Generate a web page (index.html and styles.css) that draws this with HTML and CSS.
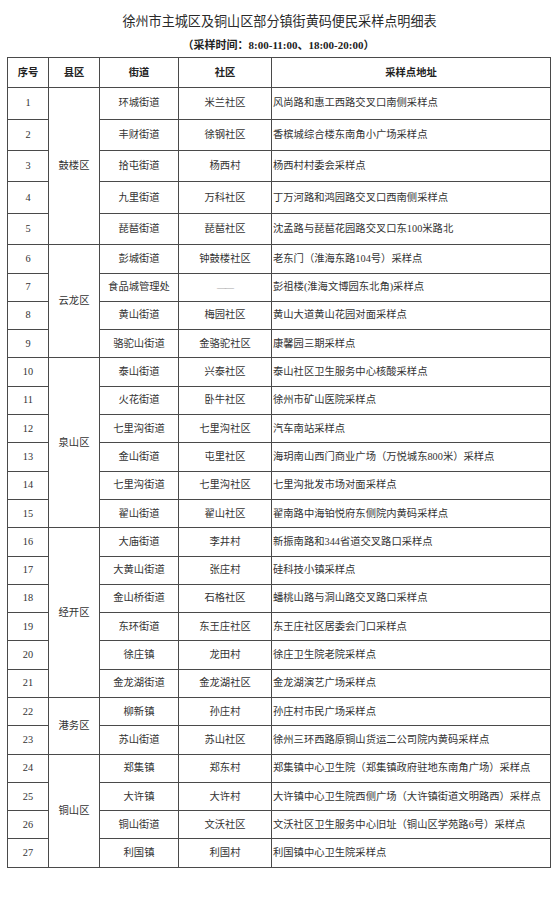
FILE: index.html
```html
<!DOCTYPE html>
<html lang="zh-CN">
<head>
<meta charset="utf-8">
<title>徐州市主城区及铜山区部分镇街黄码便民采样点明细表</title>
<link rel="stylesheet" href="styles.css">
</head>
<body>
<div class="page">
  <h1 class="title">徐州市主城区及铜山区部分镇街黄码便民采样点明细表</h1>
  <p class="subtitle">（采样时间：8:00-11:00、18:00-20:00）</p>
  <table class="sheet">
    <colgroup>
      <col class="c-no"><col class="c-dist"><col class="c-street"><col class="c-comm"><col class="c-addr">
    </colgroup>
    <thead>
      <tr class="head"><th>序号</th><th>县区</th><th>街道</th><th>社区</th><th>采样点地址</th></tr>
    </thead>
    <tbody>
      <tr class="tall"><td>1</td><td rowspan="5">鼓楼区</td><td>环城街道</td><td>米兰社区</td><td class="addr">风尚路和惠工西路交叉口南侧采样点</td></tr>
      <tr class="tall"><td>2</td><td>丰财街道</td><td>徐钢社区</td><td class="addr">香槟城综合楼东南角小广场采样点</td></tr>
      <tr class="tall"><td>3</td><td>拾屯街道</td><td>杨西村</td><td class="addr">杨西村村委会采样点</td></tr>
      <tr class="tall"><td>4</td><td>九里街道</td><td>万科社区</td><td class="addr">丁万河路和鸿园路交叉口西南侧采样点</td></tr>
      <tr class="tall"><td>5</td><td>琵琶街道</td><td>琵琶社区</td><td class="addr">沈孟路与琵琶花园路交叉口东100米路北</td></tr>
      <tr><td>6</td><td rowspan="4">云龙区</td><td>彭城街道</td><td>钟鼓楼社区</td><td class="addr">老东门（淮海东路104号）采样点</td></tr>
      <tr><td>7</td><td>食品城管理处</td><td class="dash">——</td><td class="addr">彭祖楼(淮海文博园东北角)采样点</td></tr>
      <tr><td>8</td><td>黄山街道</td><td>梅园社区</td><td class="addr">黄山大道黄山花园对面采样点</td></tr>
      <tr><td>9</td><td>骆驼山街道</td><td>金骆驼社区</td><td class="addr">康馨园三期采样点</td></tr>
      <tr><td>10</td><td rowspan="6">泉山区</td><td>泰山街道</td><td>兴泰社区</td><td class="addr">泰山社区卫生服务中心核酸采样点</td></tr>
      <tr><td>11</td><td>火花街道</td><td>卧牛社区</td><td class="addr">徐州市矿山医院采样点</td></tr>
      <tr><td>12</td><td>七里沟街道</td><td>七里沟社区</td><td class="addr">汽车南站采样点</td></tr>
      <tr><td>13</td><td>金山街道</td><td>屯里社区</td><td class="addr">海玥南山西门商业广场（万悦城东800米）采样点</td></tr>
      <tr><td>14</td><td>七里沟街道</td><td>七里沟社区</td><td class="addr">七里沟批发市场对面采样点</td></tr>
      <tr><td>15</td><td>翟山街道</td><td>翟山社区</td><td class="addr">翟南路中海铂悦府东侧院内黄码采样点</td></tr>
      <tr><td>16</td><td rowspan="6">经开区</td><td>大庙街道</td><td>李井村</td><td class="addr">新振南路和344省道交叉路口采样点</td></tr>
      <tr><td>17</td><td>大黄山街道</td><td>张庄村</td><td class="addr">硅科技小镇采样点</td></tr>
      <tr><td>18</td><td>金山桥街道</td><td>石格社区</td><td class="addr">蟠桃山路与洞山路交叉路口采样点</td></tr>
      <tr><td>19</td><td>东环街道</td><td>东王庄社区</td><td class="addr">东王庄社区居委会门口采样点</td></tr>
      <tr><td>20</td><td>徐庄镇</td><td>龙田村</td><td class="addr">徐庄卫生院老院采样点</td></tr>
      <tr><td>21</td><td>金龙湖街道</td><td>金龙湖社区</td><td class="addr">金龙湖演艺广场采样点</td></tr>
      <tr><td>22</td><td rowspan="2">港务区</td><td>柳新镇</td><td>孙庄村</td><td class="addr">孙庄村市民广场采样点</td></tr>
      <tr><td>23</td><td>苏山街道</td><td>苏山社区</td><td class="addr">徐州三环西路原铜山货运二公司院内黄码采样点</td></tr>
      <tr><td>24</td><td rowspan="4">铜山区</td><td>郑集镇</td><td>郑东村</td><td class="addr">郑集镇中心卫生院（郑集镇政府驻地东南角广场）采样点</td></tr>
      <tr><td>25</td><td>大许镇</td><td>大许村</td><td class="addr">大许镇中心卫生院西侧广场（大许镇街道文明路西）采样点</td></tr>
      <tr><td>26</td><td>铜山街道</td><td>文沃社区</td><td class="addr">文沃社区卫生服务中心旧址（铜山区学苑路6号）采样点</td></tr>
      <tr><td>27</td><td>利国镇</td><td>利国村</td><td class="addr">利国镇中心卫生院采样点</td></tr>
    </tbody>
  </table>
</div>
</body>
</html>
```

FILE: styles.css
```css
html, body {
  margin: 0;
  padding: 0;
  background: #ffffff;
}

.page {
  width: 556px;
  padding: 14px 0 30px 7px;
  box-sizing: border-box;
  font-family: "Liberation Serif", "Noto Sans CJK SC", serif;
  color: #333333;
}

.title {
  margin: 0;
  width: 543px;
  text-align: center;
  font-family: "Noto Sans CJK SC", sans-serif;
  font-weight: 400;
  font-size: 13.1px;
  line-height: 13px;
  color: #2a2a2a;
  transform: translateX(1px);
}

.subtitle {
  margin: 12px 0 0;
  width: 543px;
  text-align: center;
  font-weight: 700;
  font-size: 11px;
  line-height: 12px;
  color: #222222;
}

.sheet {
  margin-top: 6px;
  width: 543px;
  border-collapse: collapse;
  table-layout: fixed;
  font-size: 10.3px;
}

.c-no { width: 41px; }
.c-dist { width: 51px; }
.c-street { width: 79px; }
.c-comm { width: 93px; }
.c-addr { width: 279px; }

.sheet th,
.sheet td {
  border: 1px solid #4a4a4a;
  padding: 0;
  text-align: center;
  vertical-align: middle;
  white-space: nowrap;
  overflow: hidden;
  line-height: 12px;
}

.sheet th {
  font-weight: 700;
  color: #222222;
}

.head th { height: 29.3px; }
.sheet tbody tr td { height: 27.3px; }
.sheet tbody tr.tall td { height: 30.4px; }

.sheet td.addr {
  text-align: left;
  padding-left: 1px;
}

.sheet td.dash {
  color: #aaaaaa;
  font-size: 9px;
  letter-spacing: -1px;
}
```
